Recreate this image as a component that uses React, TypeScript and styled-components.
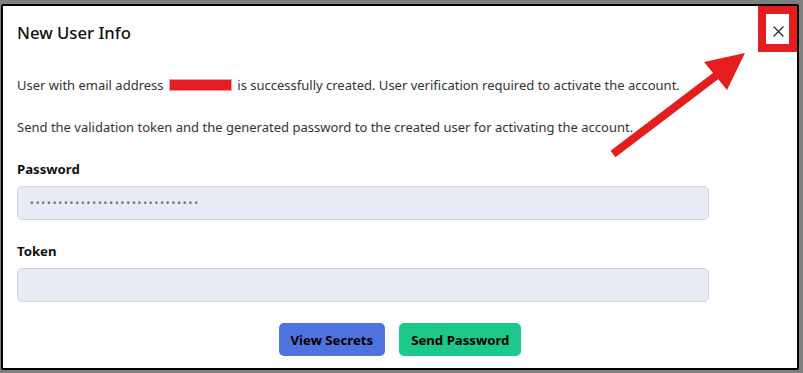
import { FC } from "react";
import styled, { createGlobalStyle } from "styled-components";

const GlobalStyle = createGlobalStyle`
  html, body, #root {
    height: 100%;
  }
  body {
    margin: 0;
    padding: 4px 4px 3px 1px;
    box-sizing: border-box;
    background: #808080;
    font-family: "Noto Sans", "Open Sans", sans-serif;
    color: #333;
  }
  * {
    box-sizing: border-box;
  }
`;

const Dialog = styled.div`
  position: relative;
  height: 100%;
  background: #fff;
  border: 2px solid #000;
  border-radius: 2px;
  display: flex;
  flex-direction: column;
`;

const Header = styled.div`
  display: flex;
  align-items: center;
  justify-content: space-between;
  padding: 15px 7px 15px 14px;
`;

const Title = styled.h5`
  margin: 0;
  font-size: 16.7px;
  line-height: 24px;
  font-weight: 500;
  color: #111;
`;

const CloseButton = styled.button`
  width: 24px;
  height: 24px;
  margin-top: -4px;
  padding: 0;
  border: none;
  background: transparent;
  display: flex;
  align-items: center;
  justify-content: center;
  cursor: pointer;
`;

const Body = styled.div`
  padding: 15px 14px 12px;
  flex: 1;
  display: flex;
  flex-direction: column;
`;

const Text = styled.p`
  margin: 0 0 21px;
  font-size: 13px;
  line-height: 21px;
`;

const Redacted = styled.span`
  display: inline-block;
  width: 63px;
  height: 12px;
  vertical-align: -1px;
  background: #e81c24;
  border: 1px solid #f4a0a0;
  margin: 0 2px;
`;

const Form = styled.div`
  width: 692px;
`;

const Field = styled.div`
  margin-bottom: 21px;
`;

const Label = styled.label`
  display: block;
  font-size: 13.2px;
  line-height: 21px;
  font-weight: 700;
  color: #111;
  margin-bottom: 6px;
`;

const Input = styled.input`
  display: block;
  width: 100%;
  height: 34px;
  padding: 0 12px;
  border: 1px solid #d3d5e6;
  border-radius: 5px;
  background: #e9ebf4;
  color: #6e707e;
  font-family: "Noto Sans", sans-serif;
  font-size: 10px;
  letter-spacing: 1.9px;
  outline: none;
`;

const Actions = styled.div`
  display: flex;
  justify-content: center;
  gap: 14px;
`;

const Button = styled.button<{ $color: string }>`
  height: 33px;
  padding: 0 12px;
  border: none;
  border-radius: 5px;
  background: ${({ $color }) => $color};
  color: #000;
  font-family: "Noto Sans", sans-serif;
  font-size: 13.2px;
  font-weight: 700;
  cursor: pointer;
`;

const Highlight = styled.div`
  position: absolute;
  left: 755px;
  top: 0;
  width: 39px;
  height: 46px;
  border: 8px solid #e41e1e;
  pointer-events: none;
`;

const ArrowLayer = styled.svg`
  position: absolute;
  left: 0;
  top: 0;
  width: 100%;
  height: 100%;
  pointer-events: none;
`;

const App: FC = () => {
  return (
    <>
      <GlobalStyle />
      <Dialog>
        <Header>
          <Title>New User Info</Title>
          <CloseButton aria-label="Close">
            <svg width="11" height="11" viewBox="0 0 11 11">
              <path d="M0.5 0.5 L10.5 10.5 M10.5 0.5 L0.5 10.5" stroke="#222" strokeWidth="1.1" />
            </svg>
          </CloseButton>
        </Header>
        <Body>
          <Text>
            User with email address <Redacted /> is successfully created. User verification required to activate the
            account.
          </Text>
          <Text>
            Send the validation token and the generated password to the created user for activating the account.
          </Text>
          <Form>
            <Field>
              <Label>Password</Label>
              <Input type="password" readOnly value="abcdefghijklmnopqrstuvwxyz1234" />
            </Field>
            <Field>
              <Label>Token</Label>
              <Input type="text" readOnly value="" />
            </Field>
          </Form>
          <Actions>
            <Button $color="#4e73df">View Secrets</Button>
            <Button $color="#1cc88a">Send Password</Button>
          </Actions>
        </Body>
        <Highlight />
        <ArrowLayer>
          <line x1="610" y1="148" x2="714" y2="69" stroke="#e41e1e" strokeWidth="8" />
          <polygon points="742,47 701,56 724,84" fill="#e41e1e" />
        </ArrowLayer>
      </Dialog>
    </>
  );
};

export default App;
